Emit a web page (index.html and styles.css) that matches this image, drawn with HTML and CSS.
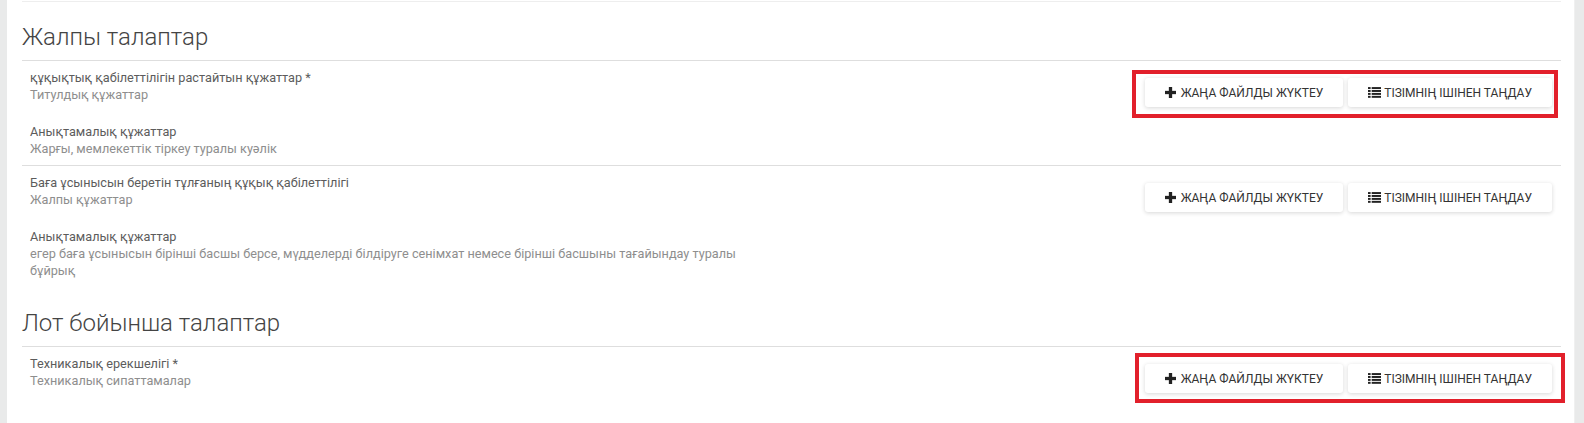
FILE: index.html
```html
<!DOCTYPE html>
<html lang="kk">
<head>
<meta charset="utf-8">
<title>Талаптар</title>
<link rel="stylesheet" href="styles.css">
</head>
<body>
<div class="page">
  <div class="card">
    <div class="top-rule"></div>

    <h3 class="section-title">Жалпы талаптар</h3>
    <div class="req-row">
      <div class="req-info">
        <div class="doc">
          <div class="doc-name">құқықтық қабілеттілігін растайтын құжаттар <span class="req">*</span></div>
          <div class="doc-type">Титулдық құжаттар</div>
        </div>
        <div class="doc">
          <div class="doc-name">Анықтамалық құжаттар</div>
          <div class="doc-type">Жарғы, мемлекеттік тіркеу туралы куәлік</div>
        </div>
      </div>
      <div class="req-actions">
        <div class="btn-group">
          <span class="mark mark-a"></span>
          <button class="btn" type="button"><svg class="ico ico-plus" viewBox="0 0 10 10"><rect x="3.5" y="0" width="3" height="10"/><rect x="0" y="3.5" width="10" height="3"/></svg><span>ЖАҢА ФАЙЛДЫ ЖҮКТЕУ</span></button>
          <button class="btn" type="button"><svg class="ico ico-list" viewBox="0 0 12 10"><rect x="0" y="0" width="2.4" height="1.8"/><rect x="3.4" y="0" width="8.6" height="1.8"/><rect x="0" y="2.7" width="2.4" height="1.8"/><rect x="3.4" y="2.7" width="8.6" height="1.8"/><rect x="0" y="5.4" width="2.4" height="1.8"/><rect x="3.4" y="5.4" width="8.6" height="1.8"/><rect x="0" y="8.1" width="2.4" height="1.8"/><rect x="3.4" y="8.1" width="8.6" height="1.8"/></svg><span>ТІЗІМНІҢ ІШІНЕН ТАҢДАУ</span></button>
        </div>
      </div>
    </div>
    <div class="req-row">
      <div class="req-info">
        <div class="doc">
          <div class="doc-name">Баға ұсынысын беретін тұлғаның құқық қабілеттілігі</div>
          <div class="doc-type">Жалпы құжаттар</div>
        </div>
        <div class="doc">
          <div class="doc-name">Анықтамалық құжаттар</div>
          <div class="doc-type">егер баға ұсынысын бірінші басшы берсе, мүдделерді білдіруге сенімхат немесе бірінші басшыны тағайындау туралы бұйрық</div>
        </div>
      </div>
      <div class="req-actions">
        <div class="btn-group">
          <button class="btn" type="button"><svg class="ico ico-plus" viewBox="0 0 10 10"><rect x="3.5" y="0" width="3" height="10"/><rect x="0" y="3.5" width="10" height="3"/></svg><span>ЖАҢА ФАЙЛДЫ ЖҮКТЕУ</span></button>
          <button class="btn" type="button"><svg class="ico ico-list" viewBox="0 0 12 10"><rect x="0" y="0" width="2.4" height="1.8"/><rect x="3.4" y="0" width="8.6" height="1.8"/><rect x="0" y="2.7" width="2.4" height="1.8"/><rect x="3.4" y="2.7" width="8.6" height="1.8"/><rect x="0" y="5.4" width="2.4" height="1.8"/><rect x="3.4" y="5.4" width="8.6" height="1.8"/><rect x="0" y="8.1" width="2.4" height="1.8"/><rect x="3.4" y="8.1" width="8.6" height="1.8"/></svg><span>ТІЗІМНІҢ ІШІНЕН ТАҢДАУ</span></button>
        </div>
      </div>
    </div>

    <h3 class="section-title section-title-next">Лот бойынша талаптар</h3>
    <div class="req-row">
      <div class="req-info">
        <div class="doc">
          <div class="doc-name">Техникалық ерекшелігі <span class="req">*</span></div>
          <div class="doc-type">Техникалық сипаттамалар</div>
        </div>
      </div>
      <div class="req-actions">
        <div class="btn-group">
          <span class="mark mark-b"></span>
          <button class="btn" type="button"><svg class="ico ico-plus" viewBox="0 0 10 10"><rect x="3.5" y="0" width="3" height="10"/><rect x="0" y="3.5" width="10" height="3"/></svg><span>ЖАҢА ФАЙЛДЫ ЖҮКТЕУ</span></button>
          <button class="btn" type="button"><svg class="ico ico-list" viewBox="0 0 12 10"><rect x="0" y="0" width="2.4" height="1.8"/><rect x="3.4" y="0" width="8.6" height="1.8"/><rect x="0" y="2.7" width="2.4" height="1.8"/><rect x="3.4" y="2.7" width="8.6" height="1.8"/><rect x="0" y="5.4" width="2.4" height="1.8"/><rect x="3.4" y="5.4" width="8.6" height="1.8"/><rect x="0" y="8.1" width="2.4" height="1.8"/><rect x="3.4" y="8.1" width="8.6" height="1.8"/></svg><span>ТІЗІМНІҢ ІШІНЕН ТАҢДАУ</span></button>
        </div>
      </div>
    </div>
  </div>
</div>
</body>
</html>
```
FILE: styles.css
```css
* { box-sizing: border-box; }

html, body {
  margin: 0;
  padding: 0;
  height: 100%;
}

body {
  background: #e9eaea;
  font-family: Roboto, "Noto Sans", "DejaVu Sans", sans-serif;
  color: #5c5c5c;
  overflow: hidden;
}

.page {
  padding-left: 7px;
  height: 100%;
}

.card {
  width: 1568px;
  height: 100%;
  background: #fff;
  border-right: 1px solid #f0f0f0;
  padding: 1px 13px 0 15px;
}

.top-rule {
  height: 1px;
  background: #eeeeee;
}

.section-title {
  margin: 21px 0 0;
  padding: 0 0 9px;
  font-size: 24px;
  line-height: 28px;
  font-weight: 300;
  color: #444;
  border-bottom: 1px solid #dedede;
}

.section-title-next {
  margin-top: 22px;
}

.req-row {
  display: flex;
  padding: 8px 9px 8px 8px;
}

.req-row + .req-row {
  border-top: 1px solid #dedede;
}

.req-info {
  width: 50%;
  padding-right: 8px;
}

.doc + .doc {
  margin-top: 20px;
}

.doc-name {
  font-size: 12.7px;
  line-height: 17px;
  color: #5c5c5c;
}

.doc-type {
  font-size: 12.7px;
  line-height: 17px;
  color: #8e8e8e;
}

.req {
  color: #5c5c5c;
}

.req-actions {
  width: 50%;
  display: flex;
  justify-content: flex-end;
  align-items: flex-start;
}

.btn-group {
  position: relative;
  display: flex;
  gap: 5px;
  margin-top: 9px;
}

.btn {
  display: inline-flex;
  align-items: center;
  justify-content: center;
  height: 29px;
  padding: 0 20px;
  border: 0;
  border-radius: 3px;
  background: #fff;
  box-shadow: 0 1px 4px rgba(0, 0, 0, 0.16);
  font-family: Roboto, "Noto Sans", sans-serif;
  font-size: 12px;
  color: #333;
  cursor: pointer;
}

.ico {
  fill: #222;
  flex: none;
}

.ico-plus {
  width: 11px;
  height: 11px;
  margin-right: 5px;
}

.ico-list {
  width: 13px;
  height: 11px;
  margin-right: 3px;
}

.mark {
  position: absolute;
  border: 4px solid #e2202b;
  pointer-events: none;
}

.mark-a {
  left: -13px;
  right: -6px;
  top: -8px;
  bottom: -11px;
}

.mark-b {
  left: -10px;
  right: -13px;
  top: -11px;
  bottom: -10px;
}
```
